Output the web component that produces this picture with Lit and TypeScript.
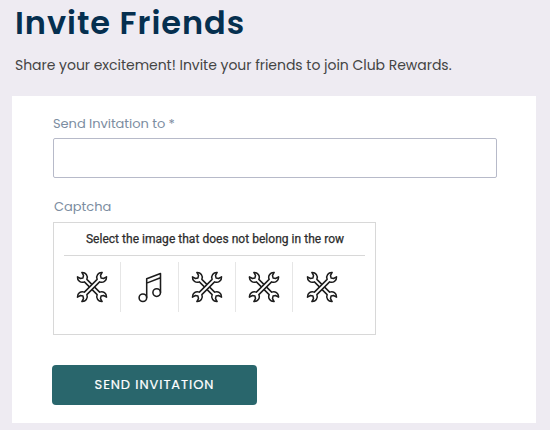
import { LitElement, html, css, svg } from "lit";
import { customElement, property } from "lit/decorators.js";

const WRENCH =
  "M-1.8-9.3V9.3A5.1 5.1 0 0 0-3.2 18L-2.2 14.6L0 13.2L2.2 14.6L3.2 18A5.1 5.1 0 0 0 1.8 9.3V-9.3A5.1 5.1 0 0 0 3.2-18L2.2-14.6L0-13.2L-2.2-14.6L-3.2-18A5.1 5.1 0 0 0-1.8-9.3Z";

@customElement("captcha-icon")
export class CaptchaIcon extends LitElement {
  @property() name = "tools";

  static styles = css`
    :host { display: block; width: 34px; height: 34px; }
    svg { display: block; fill: #fff; stroke: #1c1c1c; stroke-width: 1.55; stroke-linejoin: round; }
  `;

  render() {
    const art = this.name === "music"
      ? svg`<g fill="none">
          <circle cx="-6.1" cy="10.7" r="3.8"/><circle cx="7.7" cy="5.6" r="3.8"/>
          <path d="M-2.3 10.7V-8.2L11.5-13.5V5.6M-2.3-3.9L11.5-9.2"/>
        </g>`
      : svg`<g transform="scale(.97)"><path transform="rotate(-45)" d=${WRENCH}/><path transform="rotate(45)" d=${WRENCH}/></g>`;
    return html`<svg width="34" height="34" viewBox="-17 -17 34 34" aria-hidden="true">${art}</svg>`;
  }
}

@customElement("app-root")
export class AppRoot extends LitElement {
  static styles = css`
    :host {
      display: block; box-sizing: border-box; height: 430px; overflow: hidden;
      padding: 0 14px 0 12px; background: #eeebf2;
      font-family: Poppins, Inter, "Liberation Sans", sans-serif;
    }
    * { box-sizing: border-box; }
    h1 {
      margin: 0 0 0 3px; padding-top: 3px; height: 50px; white-space: nowrap;
      font-size: 32px; line-height: 40px; font-weight: 600; letter-spacing: 0.96px; color: #052f4f;
    }
    .intro {
      margin: 0 0 0 3px; height: 46px; padding-top: 5px; white-space: nowrap;
      font-size: 14px; line-height: 20px; color: #444; letter-spacing: -0.03px;
    }
    .card { display: flex; flex-direction: column; align-items: flex-start; height: 327px; padding: 18px 39px 0 41px; background: #fff; }
    label { font-size: 13px; line-height: 20px; height: 24px; color: #7c8da1; white-space: nowrap; }
    .to { letter-spacing: -0.04px; }
    .cap { margin: 19px 0 0 1px; height: 25px; }
    input { width: 444px; height: 40px; padding: 0 10px; border: 1px solid #b7bac9; border-radius: 2px; background: #fff; outline: none; font: inherit; }
    .captcha { width: 323px; height: 113px; padding: 0 10px; border: 1px solid #d8d8d8; }
    .prompt {
      height: 33px; padding-left: 1px; border-bottom: 1px solid #d8d8d8; text-align: center; white-space: nowrap;
      font: 400 12px/32px Roboto, sans-serif; letter-spacing: 0.03px; color: #2c2c2c; -webkit-text-stroke: 0.25px #2c2c2c;
    }
    .row { display: flex; padding-top: 6px; }
    .cell { width: 57.3px; height: 50px; display: flex; align-items: center; justify-content: center; border-right: 1px solid #e6e6e6; }
    .cell:last-child { border: 0; }
    button {
      margin: 30px 0 0 -1px; width: 205px; height: 40px; padding: 0; border: 0; border-radius: 4px;
      background: #29666c; color: #fff; font: inherit; font-size: 13px; font-weight: 400; letter-spacing: 0.93px;
      -webkit-text-stroke: 0.2px #fff;
    }
  `;

  render() {
    return html`
      <h1>Invite Friends</h1>
      <p class="intro">Share your excitement! Invite your friends to join Club Rewards.</p>
      <div class="card">
        <label class="to" for="to">Send Invitation to *</label>
        <input id="to" type="text" />
        <label class="cap">Captcha</label>
        <div class="captcha">
          <div class="prompt">Select the image that does not belong in the row</div>
          <div class="row">
            ${["tools", "music", "tools", "tools", "tools"].map(
              (n) => html`<div class="cell"><captcha-icon name=${n}></captcha-icon></div>`
            )}
          </div>
        </div>
        <button type="button">SEND INVITATION</button>
      </div>
    `;
  }
}
